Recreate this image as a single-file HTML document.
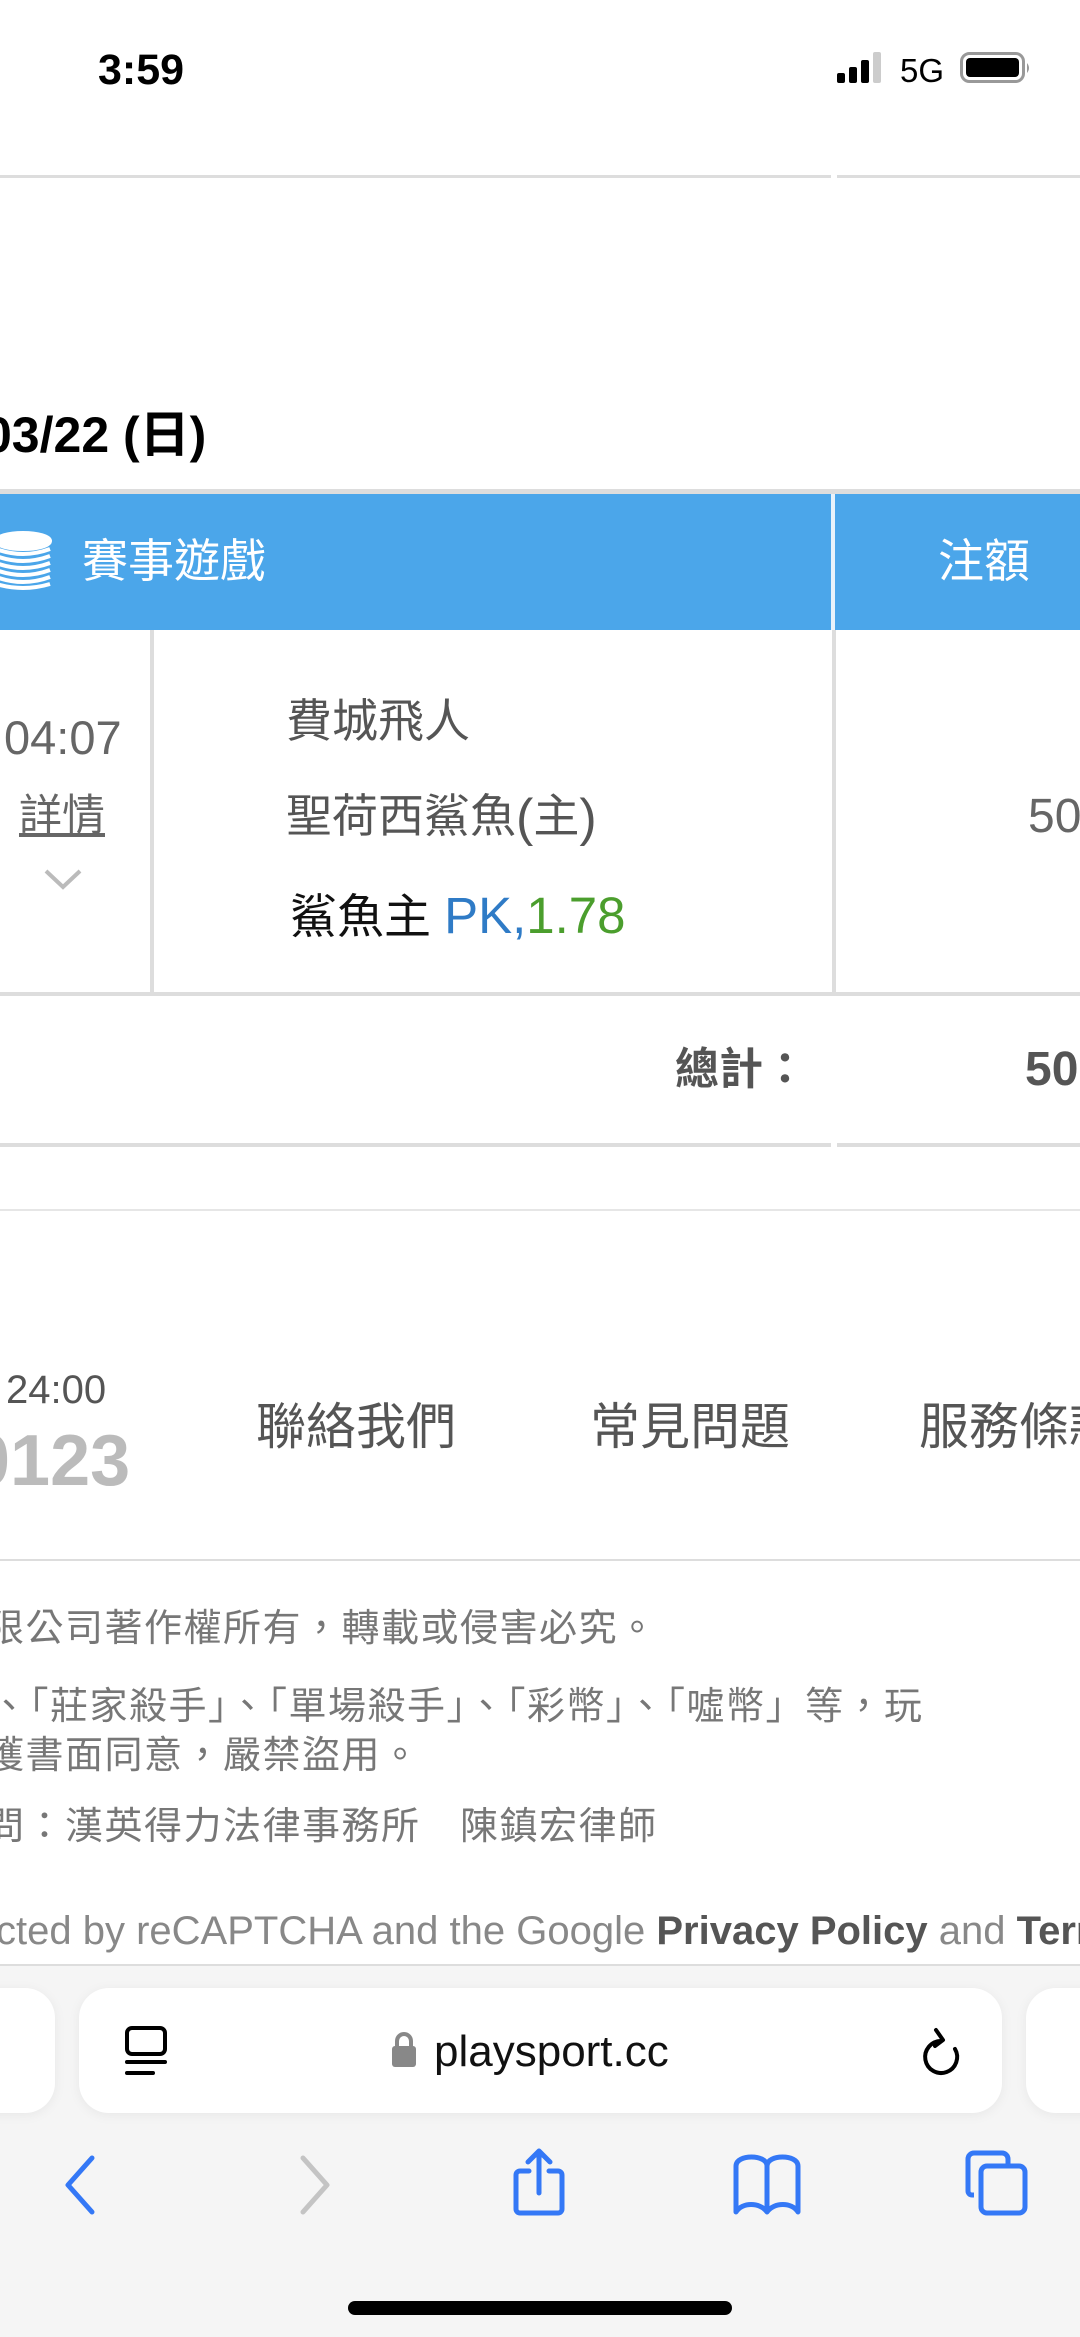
<!DOCTYPE html>
<html><head><meta charset="utf-8"><style>
*{margin:0;padding:0;box-sizing:border-box}
body{width:1080px;height:2337px;position:relative;overflow:hidden;background:#fff;font-family:"Liberation Sans","Noto Sans CJK TC",sans-serif}
.a{position:absolute;white-space:nowrap;line-height:1}
.hl{position:absolute;height:3px;background:#ddd}
.vl{position:absolute;width:4px;background:#ddd}
.cp{font-size:38px;color:#777;letter-spacing:1.5px}
</style></head><body>
<div class="a" style="left:98px;top:49px;font-size:43px;font-weight:bold;">3:59</div>
<svg class="a" style="left:837px;top:52px" width="50" height="32"><rect x="0" y="21" width="8" height="10" rx="2"/><rect x="12" y="15" width="8" height="16" rx="2"/><rect x="24" y="8" width="8" height="23" rx="2"/><rect x="36" y="0" width="8" height="31" rx="2" fill="#ccc"/></svg>
<div class="a" style="left:900px;top:54px;font-size:33px;">5G</div>
<svg class="a" style="left:960px;top:52px" width="72" height="32"><rect x="1.5" y="1.5" width="62" height="28" rx="8" fill="none" stroke="#999" stroke-width="3"/><rect x="6" y="6" width="53" height="19" rx="4"/><path d="M67 11 q4 5 0 10z" fill="#999"/></svg>

<div class="hl" style="left:0;top:175px;width:831px"></div>
<div class="hl" style="left:837px;top:175px;width:243px"></div>

<div class="a" style="left:-16px;top:410px;font-size:50px;font-weight:bold;">03/22 (日)</div>

<div class="hl" style="left:0;top:489px;width:1080px;height:5px"></div>
<div class="a" style="left:0;top:494px;width:1080px;height:136px;background:#4ba6ea"></div>
<div class="a" style="left:831px;top:494px;width:4px;height:136px;background:#e8f2fb"></div>
<svg class="a" style="left:-2px;top:531px" width="56" height="60"><g fill="none" stroke="#fff" stroke-width="4"><ellipse cx="25" cy="10" rx="27" ry="8" fill="#fff"/><path d="M-2 18 q27 10 54 0 M-2 25 q27 10 54 0 M-2 32 q27 10 54 0 M-2 39 q27 10 54 0 M-2 46 q27 10 54 0 M-2 53 q27 8 54 0"/></g></svg>
<div class="a" style="left:82px;top:538px;font-size:46px;color:#fff;">賽事遊戲</div>
<div class="a" style="left:938px;top:538px;font-size:46px;color:#fff;">注額</div>

<div class="vl" style="left:150px;top:630px;height:364px"></div>
<div class="vl" style="left:832px;top:630px;height:364px"></div>
<div class="a" style="left:4px;top:714px;font-size:47px;color:#666;">04:07</div>
<div class="a" style="left:19px;top:795px;font-size:43px;color:#666;text-decoration:underline;">詳情</div>
<svg class="a" style="left:44px;top:868px" width="38" height="22"><path d="M2 3 L19 19 L36 3" fill="none" stroke="#bbb" stroke-width="4"/></svg>
<div class="a" style="left:286px;top:698px;font-size:46px;color:#555;">費城飛人</div>
<div class="a" style="left:286px;top:792px;font-size:46px;color:#555;">聖荷西鯊魚<span style="font-size:52px;vertical-align:-3px">(</span>主<span style="font-size:52px;vertical-align:-3px">)</span></div>
<div class="a" style="left:290px;top:890px;font-size:47px;color:#111;">鯊魚主 <span style="color:#2f7bc6;font-size:51px">PK,</span><span style="color:#4b9e2d;font-size:51px">1.78</span></div>
<div class="a" style="left:1028px;top:793px;font-size:48px;color:#666;">50</div>

<div class="hl" style="left:0;top:992px;width:1080px;height:4px"></div>
<div class="a" style="left:675px;top:1048px;font-size:44px;color:#555;font-weight:bold;">總計：</div>
<div class="a" style="left:1025px;top:1046px;font-size:48px;color:#555;font-weight:bold;">50</div>
<div class="hl" style="left:0;top:1143px;width:831px;height:4px"></div>
<div class="hl" style="left:837px;top:1143px;width:243px;height:4px"></div>
<div class="hl" style="left:0;top:1209px;width:1080px;height:2px;background:#e6e6e6"></div>

<div class="a" style="left:6px;top:1370px;font-size:40px;color:#555;">24:00</div>
<div class="a" style="left:-30px;top:1425px;font-size:72px;color:#bbb;font-weight:bold;">0123</div>
<div class="a" style="left:256px;top:1402px;font-size:50px;color:#555;">聯絡我們</div>
<div class="a" style="left:590px;top:1402px;font-size:50px;color:#555;">常見問題</div>
<div class="a" style="left:919px;top:1402px;font-size:50px;color:#555;">服務條款</div>
<div class="hl" style="left:0;top:1559px;width:1080px;height:2px;background:#ddd"></div>

<div class="a cp" style="left:-14px;top:1610px;">限公司著作權所有，轉載或侵害必究。</div>
<div class="a cp" style="left:-10px;top:1688px;">、「莊家殺手」、「單場殺手」、「彩幣」、「噓幣」等，玩</div>
<div class="a cp" style="left:-14px;top:1737px;">獲書面同意，嚴禁盜用。</div>
<div class="a cp" style="left:-14px;top:1808px;">問：漢英得力法律事務所　陳鎮宏律師</div>
<div class="a" style="left:-4px;top:1911px;font-size:40px;color:#888;">cted by reCAPTCHA and the Google <b style="color:#555">Privacy Policy</b> and <b style="color:#555">Terms</b></div>

<div class="a" style="left:0;top:1964px;width:1080px;height:373px;background:#f5f5f5;border-top:2px solid #ddd"></div>
<div class="a" style="left:-40px;top:1988px;width:95px;height:125px;background:#fff;border-radius:30px;box-shadow:0 2px 12px rgba(0,0,0,.06)"></div>
<div class="a" style="left:79px;top:1988px;width:923px;height:125px;background:#fff;border-radius:30px;box-shadow:0 2px 12px rgba(0,0,0,.06)"></div>
<div class="a" style="left:1026px;top:1988px;width:100px;height:125px;background:#fff;border-radius:30px;box-shadow:0 2px 12px rgba(0,0,0,.06)"></div>
<svg class="a" style="left:124px;top:2025px" width="46" height="52"><rect x="3" y="3" width="38" height="26" rx="5" fill="none" stroke="#000" stroke-width="4"/><path d="M3 37 H41 M3 48 H29" stroke="#000" stroke-width="4" stroke-linecap="round"/></svg>
<svg class="a" style="left:390px;top:2031px" width="28" height="38"><path d="M7 16 V10 a7 7 0 0 1 14 0 V16" fill="none" stroke="#888" stroke-width="4"/><rect x="2" y="15" width="24" height="21" rx="3" fill="#888"/></svg>
<div class="a" style="left:434px;top:2030px;font-size:44px;color:#111;">playsport.cc</div>
<svg class="a" style="left:918px;top:2022px" width="46" height="56"><path d="M23 19 A16 16 0 1 0 37 27" fill="none" stroke="#000" stroke-width="4" stroke-linecap="round"/><path d="M18 8 L25 18 L17 24" fill="none" stroke="#000" stroke-width="4" stroke-linecap="round" stroke-linejoin="round"/></svg>

<svg class="a" style="left:62px;top:2155px" width="36" height="60"><path d="M30 3 L6 30 L30 57" fill="none" stroke="#3478f6" stroke-width="5" stroke-linecap="round" stroke-linejoin="round"/></svg>
<svg class="a" style="left:297px;top:2155px" width="36" height="60"><path d="M6 3 L30 30 L6 57" fill="none" stroke="#c4c4c4" stroke-width="5" stroke-linecap="round" stroke-linejoin="round"/></svg>
<svg class="a" style="left:512px;top:2147px" width="56" height="70"><path d="M17 24 H8 a4 4 0 0 0 -4 4 V62 a4 4 0 0 0 4 4 H46 a4 4 0 0 0 4 -4 V28 a4 4 0 0 0 -4 -4 H37 M27 46 V4 M16 15 L27 4 L38 15" fill="none" stroke="#3478f6" stroke-width="5" stroke-linecap="round" stroke-linejoin="round"/></svg>
<svg class="a" style="left:732px;top:2152px" width="70" height="64"><path d="M35 60 V14 C35 2 4 2 4 14 V60 C10 50 28 50 35 60 C42 50 60 50 66 60 V14 C66 2 35 2 35 14" fill="none" stroke="#3478f6" stroke-width="5" stroke-linejoin="round"/></svg>
<svg class="a" style="left:964px;top:2149px" width="66" height="68"><path d="M10 46 H8 a4 4 0 0 1 -4 -4 V10 a6 6 0 0 1 6 -6 H38 a6 6 0 0 1 6 6 V16" fill="none" stroke="#3478f6" stroke-width="5"/><rect x="17" y="17" width="44" height="47" rx="6" fill="none" stroke="#3478f6" stroke-width="5"/></svg>
<div class="a" style="left:348px;top:2301px;width:384px;height:14px;border-radius:7px;background:#000"></div>
</body></html>
